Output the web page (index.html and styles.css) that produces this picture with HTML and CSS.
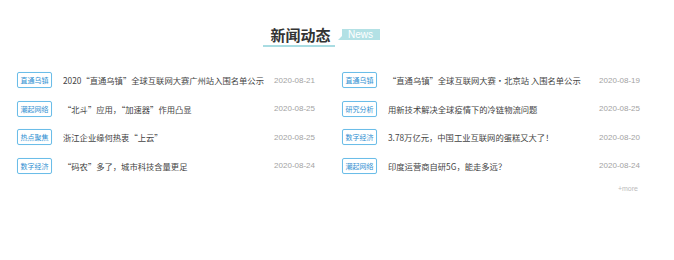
FILE: index.html
```html
<!DOCTYPE html>
<html lang="zh-CN">
<head>
  <meta charset="UTF-8">
  <meta name="viewport" content="width=device-width, initial-scale=1.0">
  <title>新闻动态</title>
  <link rel="stylesheet" href="styles.css">
</head>
<body>
  <div class="news">
    <div class="news-head">
      <h2 class="news-title">新闻动态</h2>
      <span class="news-badge">News</span>
    </div>

    <ul class="news-list">
      <li class="news-item">
        <span class="tag">直通乌镇</span>
        <a class="item-title" href="#">2020“直通乌镇”全球互联网大赛广州站入围名单公示</a>
        <span class="date">2020-08-21</span>
      </li>
      <li class="news-item">
        <span class="tag">直通乌镇</span>
        <a class="item-title" href="#">“直通乌镇”全球互联网大赛·北京站 入围名单公示</a>
        <span class="date">2020-08-19</span>
      </li>
      <li class="news-item">
        <span class="tag">潮起网络</span>
        <a class="item-title" href="#">“北斗”应用，“加速器”作用凸显</a>
        <span class="date">2020-08-25</span>
      </li>
      <li class="news-item">
        <span class="tag">研究分析</span>
        <a class="item-title" href="#">用新技术解决全球疫情下的冷链物流问题</a>
        <span class="date">2020-08-25</span>
      </li>
      <li class="news-item">
        <span class="tag">热点聚焦</span>
        <a class="item-title" href="#">浙江企业缘何热衷“上云”</a>
        <span class="date">2020-08-25</span>
      </li>
      <li class="news-item">
        <span class="tag">数字经济</span>
        <a class="item-title" href="#">3.78万亿元，中国工业互联网的蛋糕又大了！</a>
        <span class="date">2020-08-20</span>
      </li>
      <li class="news-item">
        <span class="tag">数字经济</span>
        <a class="item-title" href="#">“码农”多了，城市科技含量更足</a>
        <span class="date">2020-08-24</span>
      </li>
      <li class="news-item">
        <span class="tag">潮起网络</span>
        <a class="item-title" href="#">印度运营商自研5G，能走多远？</a>
        <span class="date">2020-08-24</span>
      </li>
    </ul>

    <div class="news-more"><a href="#">+more</a></div>
  </div>
</body>
</html>
```

FILE: styles.css
```css
body {
  margin: 0;
  background-color: #fff;
  font-family: "Noto Sans CJK SC", "Liberation Sans", sans-serif;
}
a {
  text-decoration: none;
  color: inherit;
}
.news {
  width: 650px;
  margin-left: 17px;
  padding-top: 26px;
}
.news-head {
  display: flex;
  justify-content: center;
  align-items: flex-start;
  padding-right: 41px;
}
.news-title {
  margin: 0;
  padding: 0 4px 1px 7px;
  font-size: 15px;
  line-height: 18px;
  font-weight: bold;
  color: #333;
  border-bottom: 2px solid #a9dce2;
}
.news-badge {
  position: relative;
  margin: 3px 0 0 7px;
  width: 38px;
  height: 11px;
  background-color: #b3e1e5;
  color: #fff;
  font-family: "Liberation Sans", sans-serif;
  font-size: 10px;
  line-height: 11px;
  text-align: center;
}
.news-badge::before {
  content: "";
  position: absolute;
  left: -4px;
  bottom: 0;
  border-bottom: 4px solid #b3e1e5;
  border-left: 4px solid transparent;
}
.news-list {
  list-style: none;
  margin: 19px 0 0;
  padding: 0;
  display: grid;
  grid-template-columns: 325px 325px;
  grid-auto-rows: 28.5px;
}
.news-item {
  display: flex;
  align-items: center;
  padding-right: 27px;
}
.tag {
  flex: none;
  width: 33px;
  height: 14px;
  border: 1px solid #6bbde8;
  border-radius: 2px;
  color: #2f90d2;
  font-size: 7px;
  line-height: 14px;
  text-align: center;
  box-shadow: 0 0 1px #cde9f7;
}
.item-title {
  flex: 1;
  margin-left: 11px;
  font-size: 8.3px;
  color: #444;
  white-space: nowrap;
  overflow: hidden;
}
.date {
  flex: none;
  font-family: "Liberation Sans", sans-serif;
  font-size: 8px;
  color: #a3a3a3;
}
.news-more {
  text-align: right;
  padding-right: 29px;
  margin-top: 5px;
  font-family: "Liberation Sans", sans-serif;
  font-size: 7px;
  color: #bbb;
}
```
